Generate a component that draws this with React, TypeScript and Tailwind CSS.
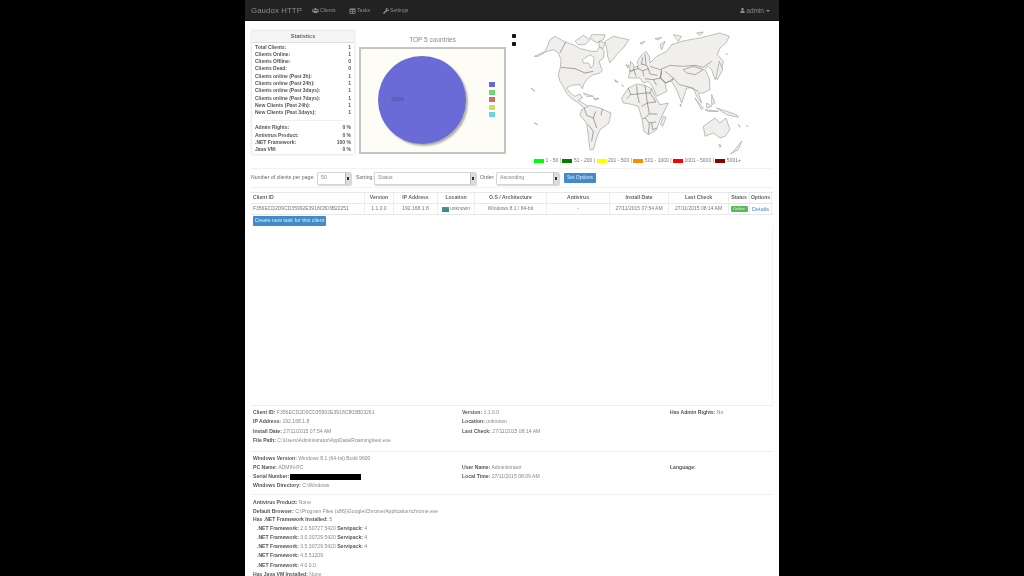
import { FaUsers, FaTable, FaWrench, FaUser } from "react-icons/fa";

const statRows = [
  ["Total Clients:", "1"],
  ["Clients Online:", "1"],
  ["Clients Offline:", "0"],
  ["Clients Dead:", "0"],
  ["Clients online (Past 3h):", "1"],
  ["Clients online (Past 24h):", "1"],
  ["Clients online (Past 3days):", "1"],
  ["Clients online (Past 7days):", "1"],
  ["New Clients (Past 24h):", "1"],
  ["New Clients (Past 3days):", "1"],
];

const percentRows = [
  ["Admin Rights:", "0 %"],
  ["Antivirus Product:", "0 %"],
  [".NET Framework:", "100 %"],
  ["Java VM:", "0 %"],
];

const legend = [
  ["bg-[#00ff00]", "1 - 50 |"],
  ["bg-[#008000]", "51 - 200 |"],
  ["bg-[#ffff00]", "201 - 500 |"],
  ["bg-[#ff8c00]", "501 - 1000 |"],
  ["bg-[#ff0000]", "1001 - 5000 |"],
  ["bg-[#8b0000]", "5001+"],
];

const pieLegend = ["bg-[#6767d8]", "bg-[#6fd86f]", "bg-[#d86767]", "bg-[#d8d867]", "bg-[#67d8d8]"];

const columns = [
  ["Client ID", "w-[114px] justify-start pl-[2px]"],
  ["Version", "w-[29px] justify-center"],
  ["IP Address", "w-[44px] justify-center"],
  ["Location", "w-[37px] justify-center"],
  ["O.S / Architecture", "w-[72px] justify-center"],
  ["Antivirus", "w-[63px] justify-center"],
  ["Install Date", "w-[59px] justify-center"],
  ["Last Check", "w-[60px] justify-center"],
  ["Status", "w-[21px] justify-center"],
  ["Options", "w-[22px] justify-center"],
];

const Field = ({ label, value }: { label: string; value?: string }) => (
  <div className="h-[9.3px] leading-[9.3px] whitespace-nowrap">
    <span className="font-bold text-[#555]">{label}</span> {value}
  </div>
);

const SelectBox = ({ text, width }: { text: string; width: string }) => (
  <span className={`${width} h-[13px] shrink-0 border border-[#d4d4d4] rounded-[1px] shadow-[1px_1px_1px_rgba(0,0,0,0.15)] flex items-center pl-[3px] justify-between text-[#888]`}>
    {text}
    <span className="w-[5px] h-full bg-[#ddd] border-l border-[#bbb] flex items-center justify-center">
      <span className="block w-[2px] h-[3px] bg-[#333]" />
    </span>
  </span>
);

const WorldMap = () => (
  <svg viewBox="525 28 235 130" className="w-[235px] h-[130px] shrink-0">
    <g transform="translate(525 28) scale(0.3333)" fill="#f1efec" stroke="#8a8a8a" strokeWidth="1.6" strokeLinejoin="round">
      <path d="M62,68 L75,35 L90,25 L120,42 L150,52 L165,62 L180,65 L200,70 L215,70 L225,55 L238,70 L235,90 L222,100 L232,128 L222,136 L205,140 L190,150 L178,165 L172,182 L165,170 L140,172 L125,180 L135,195 L150,205 L165,198 L172,210 L160,216 L178,228 L195,238 L180,242 L160,224 L140,212 L125,196 L112,170 L105,160 L100,140 L106,118 L108,95 L100,75 L85,65 L62,72 L40,85 L28,85 L50,75 Z" />
      <path fill="#fff" d="M172,95 L195,80 L207,88 L205,112 L198,120 L190,105 L175,105 Z" />
      <path d="M240,40 L265,25 L312,35 L295,60 L275,80 L255,105 L248,85 L245,60 Z" />
      <path d="M150,40 L175,22 L195,35 L180,50 L160,50 Z M200,20 L240,20 L235,35 L215,45 L195,30 Z M222,40 L240,45 L235,62 L222,55 Z" />
      <path d="M170,245 L195,232 L225,240 L258,255 L252,285 L225,305 L215,330 L205,365 L195,365 L190,325 L185,285 L165,262 Z" />
      <path d="M175,195 L205,205 L185,205 Z M205,210 L222,212 L210,216 Z M18,180 L30,190 L24,186 Z M28,285 L38,290 L32,286 Z M268,155 L280,162 L272,162 Z M290,170 L296,176 Z" />
      <path fill="none" stroke="#5a5a5a" d="M108,118 L150,122 L180,135 L205,130 M122,42 L105,75 M178,240 L185,262 L205,270 L215,300 M190,290 L205,310 L200,340 M212,250 L205,270 M232,243 L228,262" />
    </g>
    <g transform="translate(640 28) scale(0.3333)" fill="#f1efec" stroke="#8a8a8a" strokeWidth="1.6" strokeLinejoin="round">
      <path d="M-35,150 L-30,130 L-22,118 L-5,115 L-8,100 L5,80 L18,70 L28,85 L30,105 L50,85 L80,70 L95,50 L125,40 L150,35 L180,30 L240,15 L268,25 L258,45 L240,60 L232,80 L250,100 L245,125 L225,155 L215,125 L205,115 L195,125 L208,150 L210,185 L190,195 L175,195 L185,225 L170,205 L160,180 L140,180 L125,225 L112,190 L95,160 L75,165 L80,190 L50,205 L40,180 L25,160 L10,165 L0,150 L-20,150 Z" />
      <path d="M-55,210 L-35,180 L-10,168 L15,172 L35,182 L45,205 L60,230 L85,225 L65,265 L55,290 L50,305 L25,320 L12,310 L5,270 L-5,235 L-30,228 L-50,225 Z" />
      <path d="M190,295 L225,270 L240,285 L258,270 L270,305 L255,325 L240,330 L220,315 L195,325 Z" />
      <path d="M280,370 L305,340 L295,365 L272,378 Z M236,350 L244,352 L240,358 Z M70,265 L78,268 L68,295 L62,290 Z M120,228 L124,236 Z" />
      <path d="M165,210 L190,240 L185,245 Z M195,245 L235,250 L205,250 Z M215,200 L225,225 L215,230 Z M230,240 L290,260 L295,268 L260,260 Z M200,225 L215,235 L200,240 Z M238,100 L248,125 L232,155 L228,150 Z" />
      <path d="M-28,100 L-18,112 L-20,128 L-32,130 Z M-42,110 L-34,112 L-36,120 Z M100,20 L125,25 L115,40 Z M170,15 L190,12 L180,22 Z M45,32 L65,28 L55,36 Z M60,50 L75,40 L65,65 Z M0,45 L15,40 L5,50 Z M258,75 L262,80 Z M295,290 L300,298 Z M320,292 L324,296 Z" />
      <path fill="none" stroke="#707070" d="M30,115 L60,125 L90,112 L130,115 L165,112 L190,118 L215,100 M130,125 L160,115 L190,125 L165,140 L140,135 Z M100,150 L118,170 L150,178 L175,190 M75,130 L100,150 L95,160 M65,125 L60,150 L75,165" />
      <path fill="none" stroke="#4a4a4a" strokeWidth="1.4" d="M-35,180 L-28,200 L-40,212 M-28,200 L-8,198 L-10,172 M-8,198 L-2,225 M-8,198 L18,195 L15,172 M18,195 L22,225 L5,235 M22,225 L48,222 M35,182 L30,195 L18,195 M30,195 L48,222 M22,225 L28,258 L52,258 M28,258 L15,270 L8,272 M15,270 L28,285 L48,282 M28,285 L25,318 M35,285 L38,305 L50,300 M-30,130 L-18,125 L-12,145 M-18,125 L-5,122 L8,128 M-5,122 L-8,115 M8,128 L12,145 M8,128 L25,122 M2,108 L20,112 L25,122 M8,88 L5,108 M15,78 L18,110 M25,122 L30,138 L52,142 M15,152 L40,155 L50,172 M40,155 L62,150 L78,165 M62,150 L65,128 M78,165 L100,152" />
    </g>
  </svg>
);

export default function App() {
  return (
    <div className="h-[576px] w-[1024px] overflow-hidden bg-black flex justify-center font-['Liberation_Sans',Arial,sans-serif] text-[5.1px] text-[#808080] blur-[0.45px]">
      <div className="w-[534px] h-full bg-white flex flex-col">
        <header className="h-[21px] shrink-0 pt-[1.5px] bg-[#222] border-b border-[#111] flex items-center text-[#8c8c8c]">
          <span className="ml-[6px] w-[61px] text-[7.8px] tracking-[0.1px]">Gaudox HTTP</span>
          <span className="w-[37px] flex items-center gap-[1px] text-[5.1px]"><FaUsers className="w-[7px] h-[7px]" />Clients</span>
          <span className="w-[34px] flex items-center gap-[1px] text-[5.1px]"><FaTable className="w-[7px] h-[6px]" />Tasks</span>
          <span className="flex items-center gap-[1px] text-[5.1px]"><FaWrench className="w-[6px] h-[6px]" />Settings</span>
          <span className="ml-auto mr-[9px] flex items-center gap-[1px] text-[6.5px]">
            <FaUser className="w-[5px] h-[5px]" />admin
            <span className="ml-[1px] border-x-[2px] border-t-[2px] border-x-transparent border-t-[#8c8c8c]" />
          </span>
        </header>

        <div className="flex h-[137px] shrink-0 pt-[9px] pl-[6px]">
          <div className="w-[104px] h-[125px] rounded-[2px] border border-[#eee] shadow-[0_0_2px_rgba(0,0,0,0.12)]">
            <div className="h-[12px] bg-[#f5f5f5] border-b border-[#ddd] flex items-center justify-center text-[5.5px] font-bold text-[#666]">Statistics</div>
            <div className="px-[3px] pt-[0.5px] text-[5px] font-bold text-[#555]">
              {statRows.map(([label, value]) => (
                <div key={label} className="h-[7.3px] leading-[7.3px] flex justify-between">
                  <span>{label}</span>
                  <span>{value}</span>
                </div>
              ))}
              <div className="mx-[8px] my-[3.5px] border-t border-[#eee]" />
              {percentRows.map(([label, value]) => (
                <div key={label} className="h-[7.3px] leading-[7.3px] flex justify-between">
                  <span>{label}</span>
                  <span>{value}</span>
                </div>
              ))}
            </div>
          </div>

          <div className="ml-[4px] w-[147px] shrink-0">
            <div className="h-[17px] pt-[6px] text-center text-[6.5px] leading-[8px] text-[#888]">TOP 5 countries</div>
            <div className="h-[107px] w-[147px] bg-[#fdfdf6] border-2 border-[#c4c4c4] flex items-center">
              <div className="ml-[17px] -mt-[2px] w-[88px] h-[88px] shrink-0 rounded-full bg-[#6b6bd8] shadow-[2px_2px_2px_rgba(0,0,0,0.3)] flex items-center">
                <span className="ml-[13px] text-[#4a4a8a]">100%</span>
              </div>
              <div className="ml-[22px] -mt-[2px] flex flex-col gap-[2.5px] bg-white p-[1px]">
                {pieLegend.map((c) => (
                  <span key={c} className={`block w-[5.5px] h-[5px] ${c}`} />
                ))}
              </div>
            </div>
          </div>

          <div className="ml-[6px] flex flex-col gap-[4px] pt-[4px] shrink-0">
            <span className="block w-[4px] h-[4px] rounded-[1px] bg-[#111]" />
            <span className="block w-[4px] h-[4px] rounded-[1px] bg-[#111]" />
          </div>
          <div className="ml-[9px] -mt-[2px] flex flex-col shrink-0">
            <WorldMap />
            <div className="-mt-[1px] ml-[9px] flex items-center gap-[1.5px] text-[5px] text-[#777] whitespace-nowrap">
              {legend.map(([c, t]) => (
                <span key={t} className="flex items-center gap-[1.5px]">
                  <span className={`block w-[10px] h-[4px] ${c}`} />
                  {t}
                </span>
              ))}
            </div>
          </div>
        </div>

        <div className="mx-[6px] h-[20px] shrink-0 border-y border-[#f2f2f2] mt-[10px] flex items-center text-[5.2px] text-[#666]">
          <span className="w-[66px] shrink-0 whitespace-nowrap">Number of clients per page:</span>
          <SelectBox text="50" width="w-[34px]" />
          <span className="ml-[5px] w-[18px] shrink-0">Sorting:</span>
          <SelectBox text="Status" width="w-[102px]" />
          <span className="ml-[4px] w-[16px] shrink-0">Order:</span>
          <SelectBox text="Ascending" width="w-[63px]" />
          <span className="ml-[5px] h-[10px] w-[32px] bg-[#428bca] rounded-[1px] text-[#dcebf7] flex items-center justify-center text-[5px]">Set Options</span>
        </div>

        <div className="mx-[6px] mt-[4px] shrink-0">
          <div className="flex h-[12px] border-y border-[#e8e8e8] font-bold text-[5.1px] text-[#666]">
            {columns.map(([name, cls]) => (
              <div key={name} className={`${cls} shrink-0 border-r border-[#eee] flex items-center whitespace-nowrap overflow-hidden`}>
                {name}
              </div>
            ))}
          </div>
          <div className="flex h-[11px] border-b border-[#e8e8e8] text-[5px] text-[#777] [&>div]:shrink-0 [&>div]:border-r [&>div]:border-[#eee] [&>div]:flex [&>div]:items-center [&>div]:justify-center [&>div]:whitespace-nowrap">
            <div className="w-[114px] !justify-start pl-[2px]">F356ECD2D9CD35992E3918C803B22251</div>
            <div className="w-[29px]">1.1.0.0</div>
            <div className="w-[44px]">192.168.1.8</div>
            <div className="w-[37px] gap-[1px]"><span className="block w-[7px] h-[5px] bg-[linear-gradient(#4d8fc4,#3f8a4f)]" />unknown</div>
            <div className="w-[72px]">Windows 8.1 / 64-bit</div>
            <div className="w-[63px]">-</div>
            <div className="w-[59px]">27/11/2015 07:54 AM</div>
            <div className="w-[60px]">27/11/2015 08:14 AM</div>
            <div className="w-[21px]"><span className="w-[17px] h-[6px] bg-[#5cb85c] text-[#e6f5e6] text-[4px] rounded-[1px] flex items-center justify-center">Online</span></div>
            <div className="w-[22px] text-[#428bca] text-[5.5px]">Details</div>
          </div>
          <div className="mt-[1px] ml-[2px] w-[73px] h-[10px] bg-[#428bca] rounded-[1px] text-[#dcebf7] flex items-center justify-center text-[5.3px]">Create new task for this client</div>
        </div>

        <div className="mx-[6px] h-[179px] shrink-0 border-r border-[#f3f3f3]" />

        <div className="mx-[6px] shrink-0 border-t border-[#eee] text-[5.1px] text-[#888]">
          <div className="grid grid-cols-[209px_208px_1fr] pl-[2px] h-[44.5px] pt-[2px]">
            <div>
              <Field label="Client ID:" value="F356ECD2D9CD35992E3918C803B03261" />
              <Field label="IP Address:" value="192.168.1.8" />
              <Field label="Install Date:" value="27/11/2015 07:54 AM" />
              <Field label="File Path:" value="C:\Users\Administrator\AppData\Roaming\test.exe" />
            </div>
            <div>
              <Field label="Version:" value="1.1.0.0" />
              <Field label="Location:" value="unknown" />
              <Field label="Last Check:" value="27/11/2015 08:14 AM" />
            </div>
            <div><Field label="Has Admin Rights:" value="No" /></div>
          </div>
          <div className="grid grid-cols-[209px_208px_1fr] pl-[2px] h-[43px] pt-[2px] border-t border-[#f0f0f0]">
            <div>
              <Field label="Windows Version:" value="Windows 8.1 (64-bit) Build 9600" />
              <Field label="PC Name:" value="ADMIN-PC" />
              <div className="h-[9.3px] flex items-center gap-[1px] font-bold text-[#555]">Serial Number: <span className="block w-[71px] h-[6px] bg-black" /></div>
              <Field label="Windows Directory:" value="C:\Windows" />
            </div>
            <div>
              <div className="h-[9.3px]" />
              <Field label="User Name:" value="Administrator" />
              <Field label="Local Time:" value="27/11/2015 08:09 AM" />
            </div>
            <div>
              <div className="h-[9.3px]" />
              <Field label="Language:" />
            </div>
          </div>
          <div className="pl-[2px] pt-[3px] border-t border-[#f0f0f0]">
            <Field label="Antivirus Product:" value="None" />
            <Field label="Default Browser:" value="C:\Program Files (x86)\Google\Chrome\Application\chrome.exe" />
            <div className="h-[7.5px] leading-[7.5px] whitespace-nowrap"><span className="font-bold text-[#555]">Has .NET Framework Installed:</span> 5</div>
            <div className="pl-[4px]">
              <div className="h-[9.3px] leading-[9.3px]"><span className="font-bold text-[#555]">.NET Framework:</span> 2.0.50727.5420 <span className="font-bold text-[#555]">Servipack:</span> 4</div>
              <div className="h-[9.3px] leading-[9.3px]"><span className="font-bold text-[#555]">.NET Framework:</span> 3.0.30729.5420 <span className="font-bold text-[#555]">Servipack:</span> 4</div>
              <div className="h-[9.3px] leading-[9.3px]"><span className="font-bold text-[#555]">.NET Framework:</span> 3.5.30729.5420 <span className="font-bold text-[#555]">Servipack:</span> 4</div>
              <Field label=".NET Framework:" value="4.5.51209" />
              <Field label=".NET Framework:" value="4.0.0.0" />
            </div>
            <Field label="Has Java VM Installed:" value="None" />
          </div>
        </div>
      </div>
    </div>
  );
}
